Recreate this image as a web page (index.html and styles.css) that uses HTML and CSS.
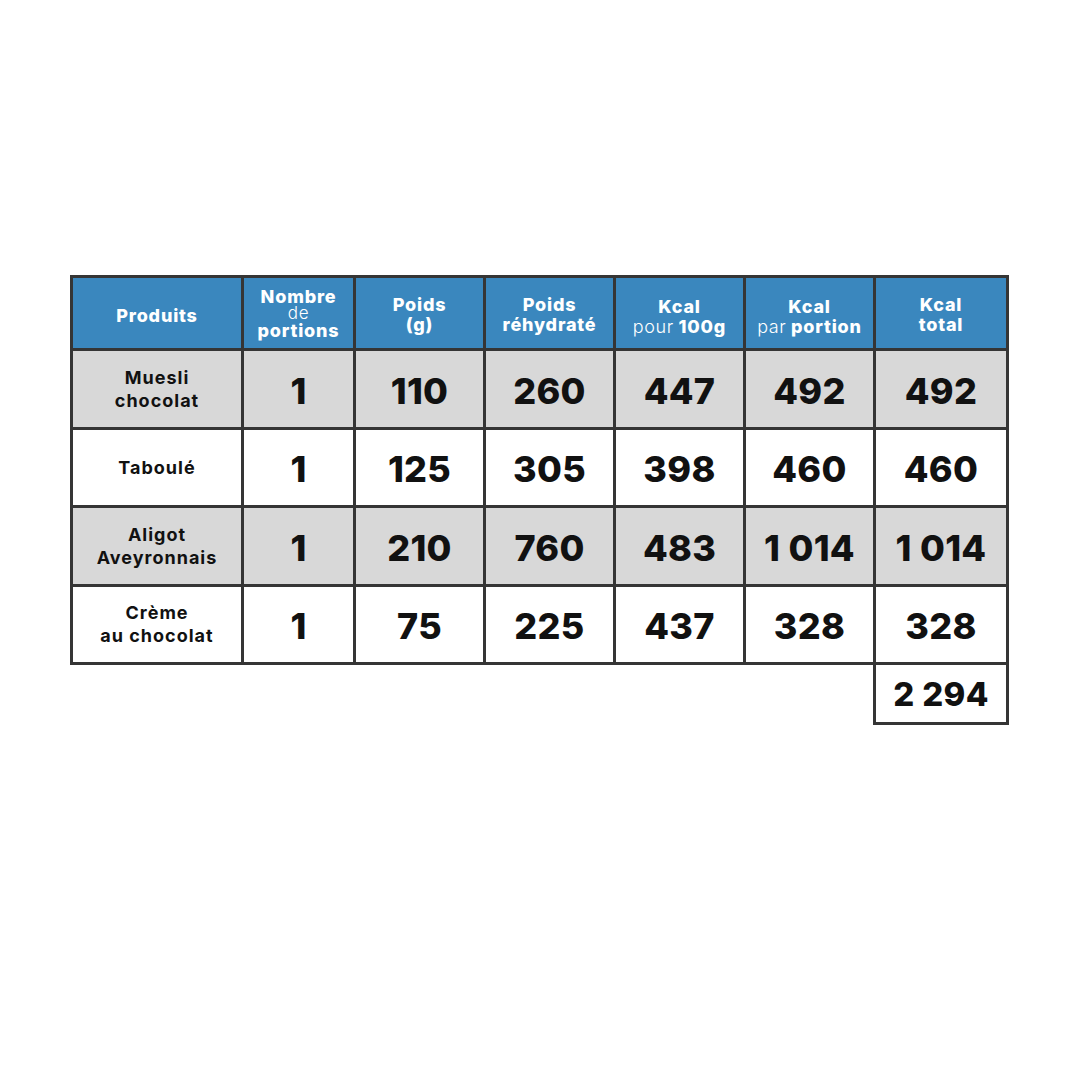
FILE: index.html
```html
<!DOCTYPE html>
<html lang="fr">
<head>
<meta charset="utf-8">
<title>Tableau calorique</title>
<link rel="stylesheet" href="styles.css">
</head>
<body>
<main class="page">
  <table class="kcal-table">
    <colgroup>
      <col class="c-prod"><col class="c-nb"><col class="c-w"><col class="c-w"><col class="c-w"><col class="c-w"><col class="c-tot">
    </colgroup>
    <thead>
      <tr class="head">
        <th class="solo">Produits</th>
        <th class="tight"><span class="ln">Nombre</span><span class="ln lt">de</span><span class="ln">portions</span></th>
        <th><b>Poids</b><br><b>(g)</b></th>
        <th><b>Poids</b><br><b>réhydraté</b></th>
        <th class="low"><b>Kcal</b><br><span class="lt">pour</span> <b>100g</b></th>
        <th class="low"><b>Kcal</b><br><span class="lt">par</span> <b>portion</b></th>
        <th><b>Kcal</b><br><b>total</b></th>
      </tr>
    </thead>
    <tbody>
      <tr class="gray">
        <td class="name">Muesli<br>chocolat</td>
        <td class="num">1</td><td class="num">110</td><td class="num">260</td><td class="num">447</td><td class="num">492</td><td class="num">492</td>
      </tr>
      <tr class="white">
        <td class="name">Taboulé</td>
        <td class="num">1</td><td class="num">125</td><td class="num">305</td><td class="num">398</td><td class="num">460</td><td class="num">460</td>
      </tr>
      <tr class="gray">
        <td class="name">Aligot<br>Aveyronnais</td>
        <td class="num">1</td><td class="num">210</td><td class="num">760</td><td class="num">483</td><td class="num">1 014</td><td class="num">1 014</td>
      </tr>
      <tr class="white">
        <td class="name">Crème<br>au chocolat</td>
        <td class="num">1</td><td class="num">75</td><td class="num">225</td><td class="num">437</td><td class="num">328</td><td class="num">328</td>
      </tr>
      <tr class="total-row">
        <td class="empty" colspan="6"></td>
        <td class="num total">2 294</td>
      </tr>
    </tbody>
  </table>
</main>
</body>
</html>
```
FILE: styles.css
```css
html, body {
  margin: 0;
  padding: 0;
  background: #ffffff;
}

.page {
  width: 1080px;
  height: 1080px;
  padding: 275px 0 0 70px;
  box-sizing: border-box;
}

.kcal-table {
  border-collapse: collapse;
  table-layout: fixed;
  width: 939px;
  font-family: Inter, "Open Sans", sans-serif;
  color: #111111;
}

.c-prod { width: 171px; }
.c-nb { width: 112px; }
.c-w { width: 130px; }
.c-tot { width: 133px; }

.kcal-table th,
.kcal-table td {
  border: 3px solid #353535;
  text-align: center;
  vertical-align: middle;
  padding: 0;
}

.head th {
  background: #3a87be;
  color: #ffffff;
  height: 63px;
  padding-top: 4px;
  font-size: 18px;
  font-weight: 800;
  line-height: 20px;
  letter-spacing: 0.8px;
}

.head th b {
  font-weight: 800;
}

.head th .lt {
  font-weight: 300;
  letter-spacing: 0.6px;
}

.head th.tight {
  padding-top: 1px;
}

.head th.tight .ln {
  display: block;
  height: 17px;
  line-height: 17px;
}

.head th.tight .lt {
  font-size: 17px;
}

.head th.low {
  padding-top: 7px;
}

.head th.solo {
  padding-top: 5px;
}

.gray td { background: #d8d8d8; }
.white td { background: #ffffff; }

.gray td, .white td {
  height: 71.5px;
}

.name {
  font-size: 18px;
  font-weight: 700;
  line-height: 23px;
  letter-spacing: 1px;
}

.num {
  font-size: 36px;
  font-weight: 800;
  letter-spacing: 0.3px;
  padding-top: 4px !important;
}

.total-row td.empty {
  border-left: none;
  border-bottom: none;
  background: transparent;
}

.total-row td.total {
  height: 57px;
  font-size: 33px;
  padding-top: 0 !important;
  background: #ffffff;
}
```
